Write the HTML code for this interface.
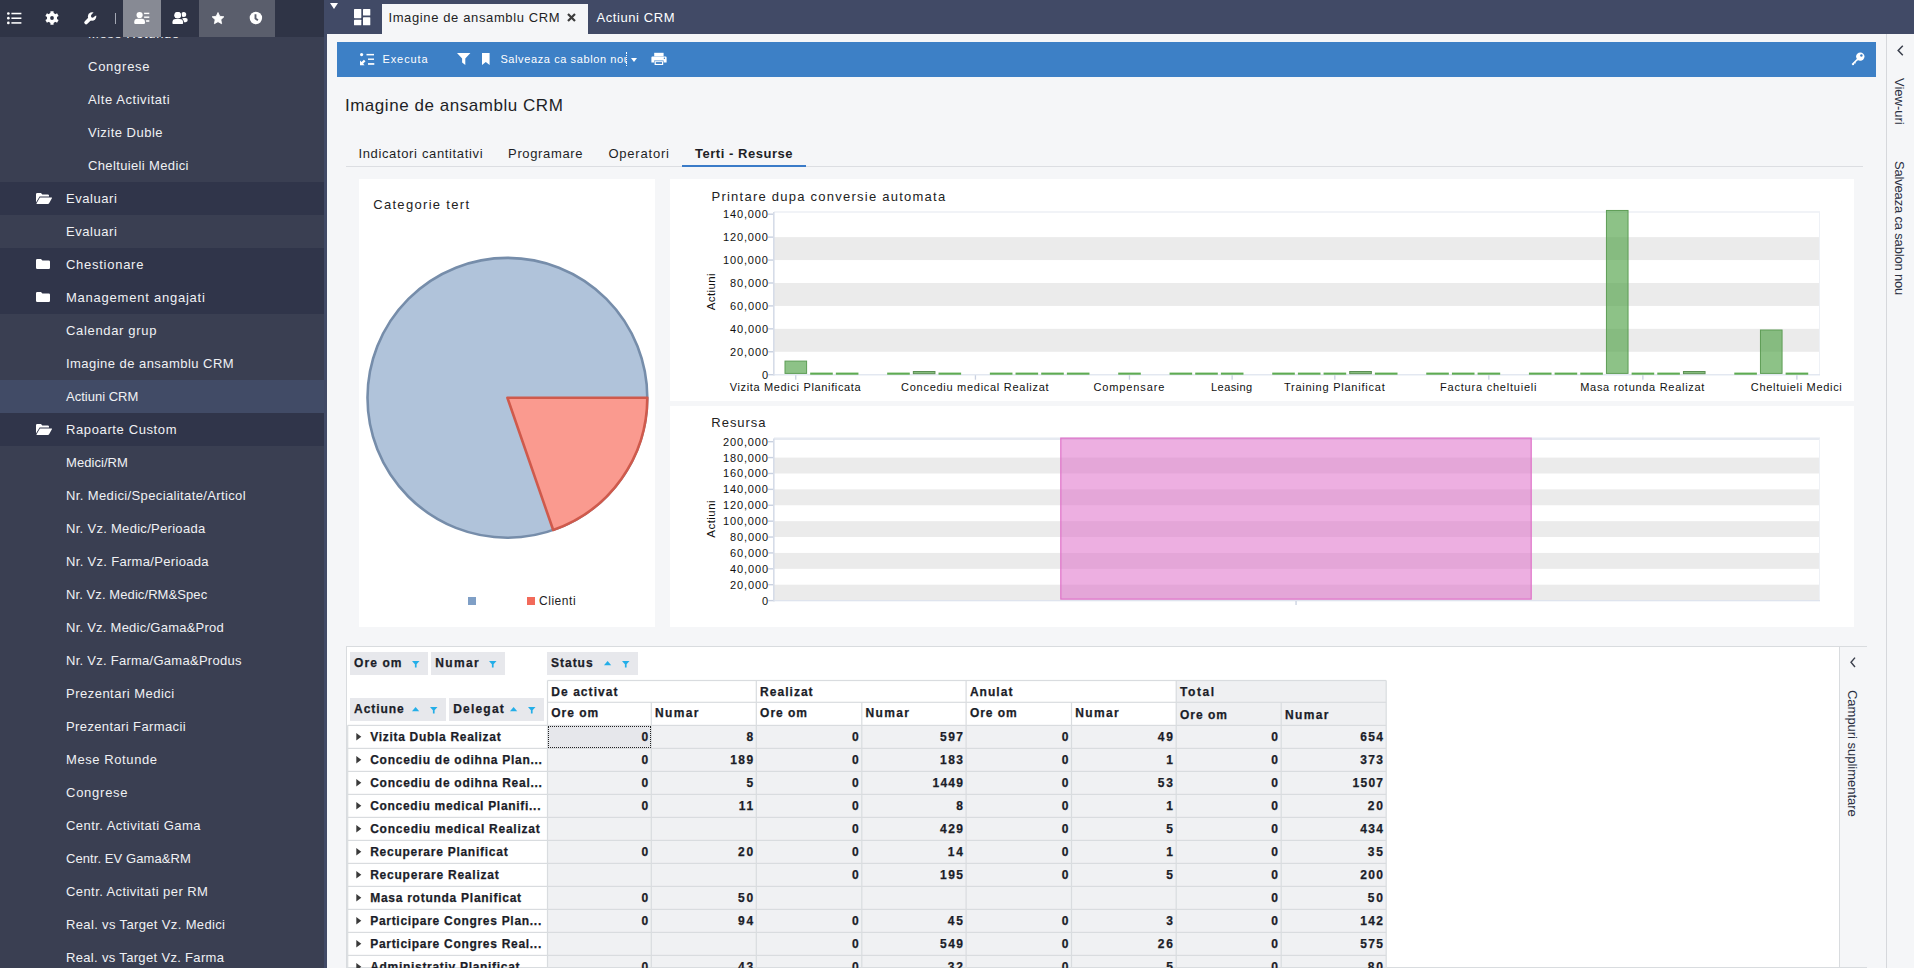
<!DOCTYPE html><html><head><meta charset="utf-8"><style>
*{box-sizing:border-box;margin:0;padding:0}
html,body{width:1914px;height:968px;overflow:hidden;background:#f5f6f8;font-family:"Liberation Sans",sans-serif;position:relative}
.a{position:absolute}
.t{position:absolute;white-space:nowrap}
svg{position:absolute;overflow:visible}
</style></head><body>
<div class="a" style="left:0px;top:0px;width:324px;height:968px;background:#3a3f52;"></div>
<div class="t" style="left:88.0px;top:27px;font-size:13px;line-height:13px;font-weight:400;color:#f0f1f4;letter-spacing:0.585px;">Mese Rotunde</div>
<div class="t" style="left:88.0px;top:60px;font-size:13px;line-height:13px;font-weight:400;color:#f0f1f4;letter-spacing:0.746px;">Congrese</div>
<div class="t" style="left:88.0px;top:93px;font-size:13px;line-height:13px;font-weight:400;color:#f0f1f4;letter-spacing:0.571px;">Alte Activitati</div>
<div class="t" style="left:88.0px;top:126px;font-size:13px;line-height:13px;font-weight:400;color:#f0f1f4;letter-spacing:0.487px;">Vizite Duble</div>
<div class="t" style="left:88.0px;top:159px;font-size:13px;line-height:13px;font-weight:400;color:#f0f1f4;letter-spacing:0.359px;">Cheltuieli Medici</div>
<div class="a" style="left:0px;top:182px;width:324px;height:33px;background:#30354a;"></div>
<svg style="left:36px;top:193px" width="16" height="11" viewBox="0 0 16 11"><path d="M0 1.2Q0 0 1.2 0H5L6.3 1.4H11.8Q13 1.4 13 2.6V3.6H3.6L0 9.5Z M3.9 4.6H15.6Q16.3 4.6 15.9 5.3L13.1 10.3Q12.7 11 12 11H0.9Q0.2 11 0.6 10.3Z" fill="#fff"/></svg>
<div class="t" style="left:66.0px;top:192px;font-size:13px;line-height:13px;font-weight:400;color:#f0f1f4;letter-spacing:0.562px;">Evaluari</div>
<div class="t" style="left:66.0px;top:225px;font-size:13px;line-height:13px;font-weight:400;color:#f0f1f4;letter-spacing:0.562px;">Evaluari</div>
<div class="a" style="left:0px;top:248px;width:324px;height:33px;background:#30354a;"></div>
<svg style="left:36px;top:259px" width="14" height="10" viewBox="0 0 14 10"><path d="M0 1.2Q0 0 1.2 0H5L6.4 1.5H12.8Q14 1.5 14 2.7V8.8Q14 10 12.8 10H1.2Q0 10 0 8.8Z" fill="#fff"/></svg>
<div class="t" style="left:66.0px;top:258px;font-size:13px;line-height:13px;font-weight:400;color:#f0f1f4;letter-spacing:0.729px;">Chestionare</div>
<div class="a" style="left:0px;top:281px;width:324px;height:33px;background:#30354a;"></div>
<svg style="left:36px;top:292px" width="14" height="10" viewBox="0 0 14 10"><path d="M0 1.2Q0 0 1.2 0H5L6.4 1.5H12.8Q14 1.5 14 2.7V8.8Q14 10 12.8 10H1.2Q0 10 0 8.8Z" fill="#fff"/></svg>
<div class="t" style="left:66.0px;top:291px;font-size:13px;line-height:13px;font-weight:400;color:#f0f1f4;letter-spacing:0.765px;">Management angajati</div>
<div class="t" style="left:66.0px;top:324px;font-size:13px;line-height:13px;font-weight:400;color:#f0f1f4;letter-spacing:0.667px;">Calendar grup</div>
<div class="t" style="left:66.0px;top:357px;font-size:13px;line-height:13px;font-weight:400;color:#f0f1f4;letter-spacing:0.458px;">Imagine de ansamblu CRM</div>
<div class="a" style="left:0px;top:380px;width:324px;height:33px;background:#414b66;"></div>
<div class="t" style="left:66.0px;top:390px;font-size:13px;line-height:13px;font-weight:400;color:#f0f1f4;letter-spacing:0.005px;">Actiuni CRM</div>
<div class="a" style="left:0px;top:413px;width:324px;height:33px;background:#30354a;"></div>
<svg style="left:36px;top:424px" width="16" height="11" viewBox="0 0 16 11"><path d="M0 1.2Q0 0 1.2 0H5L6.3 1.4H11.8Q13 1.4 13 2.6V3.6H3.6L0 9.5Z M3.9 4.6H15.6Q16.3 4.6 15.9 5.3L13.1 10.3Q12.7 11 12 11H0.9Q0.2 11 0.6 10.3Z" fill="#fff"/></svg>
<div class="t" style="left:66.0px;top:423px;font-size:13px;line-height:13px;font-weight:400;color:#f0f1f4;letter-spacing:0.615px;">Rapoarte Custom</div>
<div class="t" style="left:66.0px;top:456px;font-size:13px;line-height:13px;font-weight:400;color:#f0f1f4;letter-spacing:0.062px;">Medici/RM</div>
<div class="t" style="left:66.0px;top:489px;font-size:13px;line-height:13px;font-weight:400;color:#f0f1f4;letter-spacing:0.375px;">Nr. Medici/Specialitate/Articol</div>
<div class="t" style="left:66.0px;top:522px;font-size:13px;line-height:13px;font-weight:400;color:#f0f1f4;letter-spacing:0.297px;">Nr. Vz. Medic/Perioada</div>
<div class="t" style="left:66.0px;top:555px;font-size:13px;line-height:13px;font-weight:400;color:#f0f1f4;letter-spacing:0.318px;">Nr. Vz. Farma/Perioada</div>
<div class="t" style="left:66.0px;top:588px;font-size:13px;line-height:13px;font-weight:400;color:#f0f1f4;letter-spacing:0.088px;">Nr. Vz. Medic/RM&amp;Spec</div>
<div class="t" style="left:66.0px;top:621px;font-size:13px;line-height:13px;font-weight:400;color:#f0f1f4;letter-spacing:0.243px;">Nr. Vz. Medic/Gama&amp;Prod</div>
<div class="t" style="left:66.0px;top:654px;font-size:13px;line-height:13px;font-weight:400;color:#f0f1f4;letter-spacing:0.264px;">Nr. Vz. Farma/Gama&amp;Produs</div>
<div class="t" style="left:66.0px;top:687px;font-size:13px;line-height:13px;font-weight:400;color:#f0f1f4;letter-spacing:0.485px;">Prezentari Medici</div>
<div class="t" style="left:66.0px;top:720px;font-size:13px;line-height:13px;font-weight:400;color:#f0f1f4;letter-spacing:0.383px;">Prezentari Farmacii</div>
<div class="t" style="left:66.0px;top:753px;font-size:13px;line-height:13px;font-weight:400;color:#f0f1f4;letter-spacing:0.585px;">Mese Rotunde</div>
<div class="t" style="left:66.0px;top:786px;font-size:13px;line-height:13px;font-weight:400;color:#f0f1f4;letter-spacing:0.746px;">Congrese</div>
<div class="t" style="left:66.0px;top:819px;font-size:13px;line-height:13px;font-weight:400;color:#f0f1f4;letter-spacing:0.448px;">Centr. Activitati Gama</div>
<div class="t" style="left:66.0px;top:852px;font-size:13px;line-height:13px;font-weight:400;color:#f0f1f4;letter-spacing:0.078px;">Centr. EV Gama&amp;RM</div>
<div class="t" style="left:66.0px;top:885px;font-size:13px;line-height:13px;font-weight:400;color:#f0f1f4;letter-spacing:0.417px;">Centr. Activitati per RM</div>
<div class="t" style="left:66.0px;top:918px;font-size:13px;line-height:13px;font-weight:400;color:#f0f1f4;letter-spacing:0.358px;">Real. vs Target Vz. Medici</div>
<div class="t" style="left:66.0px;top:951px;font-size:13px;line-height:13px;font-weight:400;color:#f0f1f4;letter-spacing:0.331px;">Real. vs Target Vz. Farma</div>
<div class="a" style="left:0px;top:0px;width:324px;height:37px;background:#2f3446;"></div>
<div class="a" style="left:123px;top:0px;width:38px;height:37px;background:#878a94;"></div>
<div class="a" style="left:199px;top:0px;width:76px;height:37px;background:#5a5e6c;"></div>
<svg style="left:6.6px;top:11.6px" width="15" height="13" viewBox="0 0 15 13"><circle cx="1.35" cy="1.5" r="1.35" fill="#fff"/><circle cx="1.35" cy="6.2" r="1.35" fill="#fff"/><circle cx="1.35" cy="10.9" r="1.35" fill="#fff"/><rect x="4.4" y="0.75" width="10.0" height="1.55" fill="#fff"/><rect x="4.4" y="5.45" width="10.0" height="1.55" fill="#fff"/><rect x="4.4" y="10.15" width="10.0" height="1.55" fill="#fff"/></svg>
<svg style="left:44px;top:10px" width="16" height="16" viewBox="0 0 16 16"><polygon points="6.37,3.27 6.45,1.28 9.55,1.28 9.63,3.27 11.28,4.23 13.05,3.29 14.60,5.98 12.91,7.05 12.91,8.95 14.60,10.02 13.05,12.71 11.28,11.77 9.63,12.73 9.55,14.72 6.45,14.72 6.37,12.73 4.72,11.77 2.95,12.71 1.40,10.02 3.09,8.95 3.09,7.05 1.40,5.98 2.95,3.29 4.72,4.23" fill="#fff"/><circle cx="8.0" cy="8.0" r="5.0" fill="#fff"/><circle cx="8.0" cy="8.0" r="1.9" fill="#2f3446"/></svg>
<svg style="left:83.9px;top:11.8px" width="13" height="13" viewBox="0 0 13 13"><path d="M7.0 5.6L2.1 10.5" stroke="#fff" stroke-width="3.7" stroke-linecap="round"/><circle cx="8.1" cy="4.5" r="4.2" fill="#fff"/><path d="M7.3 3.1L10.2 -0.6 13.6 2.6 9.7 5.1Z" fill="#2f3446"/><circle cx="8.5" cy="4.1" r="1.55" fill="#2f3446"/></svg>
<div class="a" style="left:115px;top:13px;width:1px;height:11px;background:#a4a8b4;"></div>
<svg style="left:134px;top:11px" width="16" height="14" viewBox="0 0 16 14"><circle cx="5.6" cy="4.0" r="3.1" fill="#fff"/><path d="M0.2 12.1V11.2A3.4 3.4 0 0 1 3.6 7.8H7.6A3.4 3.4 0 0 1 11.0 11.2V12.1Q11.0 12.9 10.2 12.9H1.0Q0.2 12.9 0.2 12.1Z" fill="#fff"/><rect x="10.1" y="1.7" width="5.2" height="1.4" fill="#fff"/><rect x="10.1" y="5.5" width="5.2" height="1.4" fill="#fff"/><rect x="12.1" y="9.2" width="3.2" height="1.6" fill="#fff"/></svg>
<svg style="left:172px;top:11px" width="16" height="14" viewBox="0 0 16 14"><circle cx="11.7" cy="3.5" r="2.5" fill="#fff"/><rect x="9.8" y="6.9" width="5.9" height="4.3" rx="2.1" fill="#fff"/><g stroke="#2f3446" stroke-width="1.8" paint-order="stroke"><circle cx="5.7" cy="4.2" r="3.2" fill="#fff"/><path d="M0.4 12.299999999999999V11.4A3.4 3.4 0 0 1 3.8 8.0H7.699999999999999A3.4 3.4 0 0 1 11.1 11.4V12.299999999999999Q11.1 13.1 10.299999999999999 13.1H1.2000000000000002Q0.4 13.1 0.4 12.299999999999999Z" fill="#fff"/></g><circle cx="5.7" cy="4.2" r="3.2" fill="#fff"/></svg>
<svg style="left:210px;top:11px" width="15" height="14" viewBox="0 0 15 14"><polygon points="8.00,1.50 9.76,5.27 13.90,5.78 10.85,8.63 11.64,12.72 8.00,10.70 4.36,12.72 5.15,8.63 2.10,5.78 6.24,5.27" fill="#fff" stroke="#fff" stroke-width="0.8" stroke-linejoin="round"/></svg>
<svg style="left:249px;top:11px" width="14" height="14" viewBox="0 0 14 14"><circle cx="6.9" cy="7" r="6.2" fill="#fff"/><path d="M6.5 3.2V7.5L8.9 9.3" stroke="#5a5e6c" stroke-width="1.9" fill="none"/></svg>
<div class="a" style="left:324px;top:0px;width:3px;height:968px;background:#414a66;"></div>
<div class="a" style="left:324px;top:0px;width:1590px;height:34px;background:#414a66;"></div>
<div class="a" style="left:327px;top:34px;width:1587px;height:934px;background:#f5f6f8;"></div>
<svg style="left:330px;top:3px" width="8" height="6" viewBox="0 0 8 6"><path d="M0 0H8L4 6Z" fill="#fff"/></svg>
<svg style="left:354px;top:9px" width="17" height="17" viewBox="0 0 17 17"><rect x="0" y="0" width="7.3" height="9.2" rx="0.6" fill="#fff"/><rect x="9" y="0" width="7.3" height="6.5" rx="0.6" fill="#fff"/><rect x="0" y="10.7" width="7.3" height="5.6" rx="0.6" fill="#fff"/><rect x="9" y="8.2" width="7.3" height="8.1" rx="0.6" fill="#fff"/></svg>
<div class="a" style="left:382px;top:4px;width:206px;height:31px;background:#f5f6f8;"></div>
<div class="t" style="left:388.4px;top:11px;font-size:13px;line-height:13px;font-weight:400;color:#1e1e24;letter-spacing:0.626px;">Imagine de ansamblu CRM</div>
<svg style="left:567px;top:13px" width="9" height="9" viewBox="0 0 9 9"><path d="M1 1L8 8M8 1L1 8" stroke="#3c3c3c" stroke-width="2.2"/></svg>
<div class="t" style="left:596.4px;top:11px;font-size:13px;line-height:13px;font-weight:400;color:#ffffff;letter-spacing:0.595px;">Actiuni CRM</div>
<div class="a" style="left:1886px;top:34px;width:1px;height:934px;background:#d6d8dc;"></div>
<svg style="left:1897px;top:45px" width="7" height="11" viewBox="0 0 7 11"><path d="M5.8 0.8L1.2 5.5 5.8 10.2" stroke="#3a3f4c" stroke-width="1.5" fill="none"/></svg>
<div class="t" style="left:1893px;top:78px;writing-mode:vertical-rl;font-size:13px;line-height:13px;color:#2a2f3f">View-uri</div>
<div class="t" style="left:1893px;top:161px;writing-mode:vertical-rl;font-size:13px;line-height:13px;color:#2a2f3f;letter-spacing:-0.18px">Salveaza ca sablon nou</div>
<div class="a" style="left:337px;top:42px;width:1539px;height:35px;background:#3d80c6;"></div>
<svg style="left:360px;top:53px" width="15" height="13" viewBox="0 0 15 13"><circle cx="1.6" cy="1.6" r="1.6" fill="#fff"/><rect x="6.5" y="0.9" width="7.5" height="1.5" fill="#fff"/><rect x="8" y="5.5" width="6" height="1.4" fill="#fff"/><rect x="8" y="10.1" width="6.3" height="1.7" fill="#fff"/><path d="M0 12.2V7.6L1.5 9.1 3.9 6.7 5.5 8.3 3.1 10.7 4.6 12.2Z" fill="#fff"/></svg>
<div class="t" style="left:382.5px;top:54px;font-size:11px;line-height:11px;font-weight:400;color:#fff;letter-spacing:0.892px;">Executa</div>
<svg style="left:457px;top:53px" width="14" height="12" viewBox="0 0 14 12"><path d="M0 0H13.4L8.3 5.6V12L5.1 9.6V5.6Z" fill="#fff"/></svg>
<svg style="left:482px;top:53px" width="8" height="12" viewBox="0 0 8 12"><path d="M0 0H7.6V12L3.8 9 0 12Z" fill="#fff"/></svg>
<div class="a" style="left:501px;top:50px;width:125.5px;height:20px;overflow:hidden"><div class="t" style="left:-0.6px;top:4px;font-size:11px;line-height:11px;font-weight:400;color:#fff;letter-spacing:0.603px;">Salveaza ca sablon nou</div></div>
<div class="a" style="left:626px;top:52px;width:1px;height:14px;border-left:1px dotted #fff"></div>
<svg style="left:631px;top:58px" width="6" height="4" viewBox="0 0 6 4"><path d="M0 0H6L3 4Z" fill="#fff"/></svg>
<svg style="left:651px;top:52px" width="16" height="14" viewBox="0 0 16 14"><path d="M3.2 0.8H12.6V4.4H3.2Z" fill="#fff"/><path d="M1.4 4.6H14.6Q15.6 4.6 15.6 5.6V10.4H12.6V8.6H3.2V10.4H0.4V5.6Q0.4 4.6 1.4 4.6Z" fill="#fff"/><rect x="3.6" y="9.2" width="8.6" height="3.8" fill="#fff"/><rect x="4.8" y="10.1" width="6.2" height="1.8" fill="#3d80c6"/><circle cx="13.4" cy="6.3" r="0.7" fill="#3d80c6"/></svg>
<svg style="left:1851px;top:52px" width="14" height="14" viewBox="0 0 14 14"><circle cx="9.3" cy="4.6" r="4.2" fill="#fff"/><circle cx="10.4" cy="3.5" r="1.2" fill="#3d80c6"/><path d="M6.2 6.4L0.6 12 1.6 13.2 3 13 3.2 11.6 4.6 11.4 4.8 10 7.8 7.6Z" fill="#fff"/></svg>
<div class="t" style="left:344.9px;top:97px;font-size:17px;line-height:17px;font-weight:400;color:#1e1f26;letter-spacing:0.542px;">Imagine de ansamblu CRM</div>
<div class="a" style="left:346px;top:166px;width:1517px;height:1px;background:#dcdee2;"></div>
<div class="t" style="left:358.4px;top:147px;font-size:13px;line-height:13px;font-weight:400;color:#1e1f26;letter-spacing:0.649px;">Indicatori cantitativi</div>
<div class="t" style="left:508.1px;top:147px;font-size:13px;line-height:13px;font-weight:400;color:#1e1f26;letter-spacing:0.640px;">Programare</div>
<div class="t" style="left:608.4px;top:147px;font-size:13px;line-height:13px;font-weight:400;color:#1e1f26;letter-spacing:0.800px;">Operatori</div>
<div class="t" style="left:695.0px;top:147px;font-size:13px;line-height:13px;font-weight:700;color:#1e1f26;letter-spacing:0.530px;">Terti - Resurse</div>
<div class="a" style="left:682px;top:165px;width:124px;height:2px;background:#3a7bc8;"></div>
<div class="a" style="left:359px;top:179px;width:296px;height:448px;background:#fff;"></div>
<div class="a" style="left:670px;top:179px;width:1184px;height:222px;background:#fff;"></div>
<div class="a" style="left:670px;top:406px;width:1184px;height:221px;background:#fff;"></div>
<div class="t" style="left:373.2px;top:198px;font-size:13px;line-height:13px;font-weight:400;color:#222;letter-spacing:1.318px;">Categorie tert</div>
<svg style="left:0;top:0" width="1914" height="968" viewBox="0 0 1914 968"><circle cx="507.4" cy="397.8" r="139.9" fill="#b0c3da" stroke="#768daa" stroke-width="2.6"/><path d="M507.4 397.8L647.3 397.8A139.9 139.9 0 0 1 553.18 530.00Z" fill="#fa9a8f" stroke="#cf5a4c" stroke-width="2.6" stroke-linejoin="round"/></svg>
<div class="a" style="left:468px;top:597px;width:8px;height:8px;background:#7f9fc6;"></div>
<div class="a" style="left:527px;top:597px;width:8px;height:8px;background:#f26a5a;"></div>
<div class="t" style="left:539.0px;top:595px;font-size:12px;line-height:12px;font-weight:400;color:#222;letter-spacing:0.540px;">Clienti</div>
<div class="t" style="right:1146.00px;top:370px;font-size:11px;line-height:11px;font-weight:400;color:#111;">0</div>
<div class="t" style="right:1145.13px;top:347px;font-size:11px;line-height:11px;font-weight:400;color:#111;letter-spacing:0.869px;">20,000</div>
<div class="t" style="right:1145.13px;top:324px;font-size:11px;line-height:11px;font-weight:400;color:#111;letter-spacing:0.869px;">40,000</div>
<div class="t" style="right:1145.13px;top:301px;font-size:11px;line-height:11px;font-weight:400;color:#111;letter-spacing:0.869px;">60,000</div>
<div class="t" style="right:1145.13px;top:278px;font-size:11px;line-height:11px;font-weight:400;color:#111;letter-spacing:0.869px;">80,000</div>
<div class="t" style="right:1145.11px;top:255px;font-size:11px;line-height:11px;font-weight:400;color:#111;letter-spacing:0.889px;">100,000</div>
<div class="t" style="right:1145.11px;top:232px;font-size:11px;line-height:11px;font-weight:400;color:#111;letter-spacing:0.889px;">120,000</div>
<div class="t" style="right:1145.11px;top:209px;font-size:11px;line-height:11px;font-weight:400;color:#111;letter-spacing:0.889px;">140,000</div>
<div class="t" style="left:729.7px;top:382px;font-size:11px;line-height:11px;font-weight:400;color:#111;letter-spacing:0.652px;">Vizita Medici Planificata</div>
<div class="t" style="left:901.1px;top:382px;font-size:11px;line-height:11px;font-weight:400;color:#111;letter-spacing:0.719px;">Concediu medical Realizat</div>
<div class="t" style="left:1093.4px;top:382px;font-size:11px;line-height:11px;font-weight:400;color:#111;letter-spacing:0.891px;">Compensare</div>
<div class="t" style="left:1211.1px;top:382px;font-size:11px;line-height:11px;font-weight:400;color:#111;letter-spacing:0.409px;">Leasing</div>
<div class="t" style="left:1283.9px;top:382px;font-size:11px;line-height:11px;font-weight:400;color:#111;letter-spacing:0.765px;">Training Planificat</div>
<div class="t" style="left:1440.0px;top:382px;font-size:11px;line-height:11px;font-weight:400;color:#111;letter-spacing:0.785px;">Factura cheltuieli</div>
<div class="t" style="left:1580.2px;top:382px;font-size:11px;line-height:11px;font-weight:400;color:#111;letter-spacing:0.707px;">Masa rotunda Realizat</div>
<div class="t" style="left:1750.8px;top:382px;font-size:11px;line-height:11px;font-weight:400;color:#111;letter-spacing:0.682px;">Cheltuieli Medici</div>
<svg style="left:0;top:0" width="1914" height="968" viewBox="0 0 1914 968"><rect x="774" y="328.84" width="1046" height="22.93" fill="#ebebeb"/><rect x="774" y="282.99" width="1046" height="22.93" fill="#ebebeb"/><rect x="774" y="237.13" width="1046" height="22.93" fill="#ebebeb"/><rect x="774" y="211.5" width="1046" height="1" fill="#e3e8f0"/><rect x="1819" y="212" width="1" height="162.7" fill="#eef1f6"/><rect x="773" y="212" width="1.6" height="163.7" fill="#d6dce8"/><rect x="774" y="374.2" width="1046" height="1.2" fill="#dde3ee"/><rect x="768" y="374.00" width="5" height="1.4" fill="#c9d1e0"/><rect x="768" y="351.07" width="5" height="1.4" fill="#c9d1e0"/><rect x="768" y="328.14" width="5" height="1.4" fill="#c9d1e0"/><rect x="768" y="305.21" width="5" height="1.4" fill="#c9d1e0"/><rect x="768" y="282.29" width="5" height="1.4" fill="#c9d1e0"/><rect x="768" y="259.36" width="5" height="1.4" fill="#c9d1e0"/><rect x="768" y="236.43" width="5" height="1.4" fill="#c9d1e0"/><rect x="768" y="213.50" width="5" height="1.4" fill="#c9d1e0"/><rect x="785.00" y="361.10" width="21.60" height="12.30" fill="rgba(80,162,70,0.65)" stroke="#5d9d55" stroke-width="1"/><rect x="810.17" y="372.60" width="22.60" height="2.10" fill="#5eab52"/><rect x="835.84" y="372.60" width="22.60" height="2.10" fill="#5eab52"/><rect x="887.18" y="372.60" width="22.60" height="2.10" fill="#5eab52"/><rect x="913.35" y="371.50" width="21.60" height="2.2" fill="#86bd7e" stroke="#5b8f53" stroke-width="1"/><rect x="938.52" y="372.60" width="22.60" height="2.10" fill="#5eab52"/><rect x="989.86" y="372.60" width="22.60" height="2.10" fill="#5eab52"/><rect x="1015.53" y="372.60" width="22.60" height="2.10" fill="#5eab52"/><rect x="1041.20" y="372.60" width="22.60" height="2.10" fill="#5eab52"/><rect x="1066.87" y="372.60" width="22.60" height="2.10" fill="#5eab52"/><rect x="1118.21" y="372.60" width="22.60" height="2.10" fill="#5eab52"/><rect x="1169.55" y="372.60" width="22.60" height="2.10" fill="#5eab52"/><rect x="1195.22" y="372.60" width="22.60" height="2.10" fill="#5eab52"/><rect x="1220.89" y="372.60" width="22.60" height="2.10" fill="#5eab52"/><rect x="1272.23" y="372.60" width="22.60" height="2.10" fill="#5eab52"/><rect x="1297.90" y="372.60" width="22.60" height="2.10" fill="#5eab52"/><rect x="1323.57" y="372.60" width="22.60" height="2.10" fill="#5eab52"/><rect x="1349.74" y="371.50" width="21.60" height="2.2" fill="#86bd7e" stroke="#5b8f53" stroke-width="1"/><rect x="1374.91" y="372.60" width="22.60" height="2.10" fill="#5eab52"/><rect x="1426.25" y="372.60" width="22.60" height="2.10" fill="#5eab52"/><rect x="1451.92" y="372.60" width="22.60" height="2.10" fill="#5eab52"/><rect x="1477.59" y="372.60" width="22.60" height="2.10" fill="#5eab52"/><rect x="1528.93" y="372.60" width="22.60" height="2.10" fill="#5eab52"/><rect x="1554.60" y="372.60" width="22.60" height="2.10" fill="#5eab52"/><rect x="1580.27" y="372.60" width="22.60" height="2.10" fill="#5eab52"/><rect x="1606.44" y="210.46" width="21.60" height="162.94" fill="rgba(80,162,70,0.65)" stroke="#5d9d55" stroke-width="1"/><rect x="1631.61" y="372.60" width="22.60" height="2.10" fill="#5eab52"/><rect x="1657.28" y="372.60" width="22.60" height="2.10" fill="#5eab52"/><rect x="1683.45" y="371.50" width="21.60" height="2.2" fill="#86bd7e" stroke="#5b8f53" stroke-width="1"/><rect x="1734.29" y="372.60" width="22.60" height="2.10" fill="#5eab52"/><rect x="1760.46" y="330.03" width="21.60" height="43.37" fill="rgba(80,162,70,0.65)" stroke="#5d9d55" stroke-width="1"/><rect x="1785.63" y="372.60" width="22.60" height="2.10" fill="#5eab52"/><rect x="795.10" y="375.2" width="1.3" height="4.5" fill="#c9d1e0"/><rect x="974.79" y="375.2" width="1.3" height="4.5" fill="#c9d1e0"/><rect x="1128.81" y="375.2" width="1.3" height="4.5" fill="#c9d1e0"/><rect x="1231.49" y="375.2" width="1.3" height="4.5" fill="#c9d1e0"/><rect x="1334.17" y="375.2" width="1.3" height="4.5" fill="#c9d1e0"/><rect x="1488.19" y="375.2" width="1.3" height="4.5" fill="#c9d1e0"/><rect x="1642.21" y="375.2" width="1.3" height="4.5" fill="#c9d1e0"/><rect x="1796.23" y="375.2" width="1.3" height="4.5" fill="#c9d1e0"/></svg>
<div class="t" style="left:711.5px;top:190px;font-size:13px;line-height:13px;font-weight:400;color:#222;letter-spacing:1.244px;">Printare dupa conversie automata</div>
<div class="t" style="left:704.5px;top:273px;writing-mode:vertical-rl;transform:rotate(180deg);font-size:11.5px;line-height:13px;color:#111;letter-spacing:0.4px">Actiuni</div>
<div class="t" style="right:1146.00px;top:596px;font-size:11px;line-height:11px;font-weight:400;color:#111;">0</div>
<div class="t" style="right:1145.13px;top:580px;font-size:11px;line-height:11px;font-weight:400;color:#111;letter-spacing:0.869px;">20,000</div>
<div class="t" style="right:1145.13px;top:564px;font-size:11px;line-height:11px;font-weight:400;color:#111;letter-spacing:0.869px;">40,000</div>
<div class="t" style="right:1145.13px;top:548px;font-size:11px;line-height:11px;font-weight:400;color:#111;letter-spacing:0.869px;">60,000</div>
<div class="t" style="right:1145.13px;top:532px;font-size:11px;line-height:11px;font-weight:400;color:#111;letter-spacing:0.869px;">80,000</div>
<div class="t" style="right:1145.11px;top:516px;font-size:11px;line-height:11px;font-weight:400;color:#111;letter-spacing:0.889px;">100,000</div>
<div class="t" style="right:1145.11px;top:500px;font-size:11px;line-height:11px;font-weight:400;color:#111;letter-spacing:0.889px;">120,000</div>
<div class="t" style="right:1145.11px;top:484px;font-size:11px;line-height:11px;font-weight:400;color:#111;letter-spacing:0.889px;">140,000</div>
<div class="t" style="right:1145.11px;top:468px;font-size:11px;line-height:11px;font-weight:400;color:#111;letter-spacing:0.889px;">160,000</div>
<div class="t" style="right:1145.11px;top:453px;font-size:11px;line-height:11px;font-weight:400;color:#111;letter-spacing:0.889px;">180,000</div>
<div class="t" style="right:1145.11px;top:437px;font-size:11px;line-height:11px;font-weight:400;color:#111;letter-spacing:0.889px;">200,000</div>
<svg style="left:0;top:0" width="1914" height="968" viewBox="0 0 1914 968"><rect x="774" y="584.71" width="1046" height="15.89" fill="#ebebeb"/><rect x="774" y="552.93" width="1046" height="15.89" fill="#ebebeb"/><rect x="774" y="521.15" width="1046" height="15.89" fill="#ebebeb"/><rect x="774" y="489.37" width="1046" height="15.89" fill="#ebebeb"/><rect x="774" y="457.59" width="1046" height="15.89" fill="#ebebeb"/><rect x="774" y="437.5" width="1046" height="2.5" fill="#e6eaf1"/><rect x="1819" y="438.5" width="1" height="162.10000000000002" fill="#eef1f6"/><rect x="773" y="438.5" width="1.6" height="163.10000000000002" fill="#d6dce8"/><rect x="774" y="600.1" width="1046" height="1.2" fill="#dde3ee"/><rect x="768" y="599.90" width="5" height="1.4" fill="#c9d1e0"/><rect x="768" y="584.01" width="5" height="1.4" fill="#c9d1e0"/><rect x="768" y="568.12" width="5" height="1.4" fill="#c9d1e0"/><rect x="768" y="552.23" width="5" height="1.4" fill="#c9d1e0"/><rect x="768" y="536.34" width="5" height="1.4" fill="#c9d1e0"/><rect x="768" y="520.45" width="5" height="1.4" fill="#c9d1e0"/><rect x="768" y="504.56" width="5" height="1.4" fill="#c9d1e0"/><rect x="768" y="488.67" width="5" height="1.4" fill="#c9d1e0"/><rect x="768" y="472.78" width="5" height="1.4" fill="#c9d1e0"/><rect x="768" y="456.89" width="5" height="1.4" fill="#c9d1e0"/><rect x="768" y="441.00" width="5" height="1.4" fill="#c9d1e0"/><rect x="1060.8" y="438.1" width="470.4" height="161" fill="rgba(222,110,200,0.55)" stroke="#df72c9" stroke-width="1.2"/><rect x="1295.4" y="601" width="1.3" height="4" fill="#c9d1e0"/></svg>
<div class="t" style="left:711.3px;top:416px;font-size:13px;line-height:13px;font-weight:400;color:#222;letter-spacing:0.980px;">Resursa</div>
<div class="t" style="left:704.5px;top:500px;writing-mode:vertical-rl;transform:rotate(180deg);font-size:11.5px;line-height:13px;color:#111;letter-spacing:0.45px">Actiuni</div>
<div class="a" style="left:346px;top:646px;width:1521px;height:322px;background:#fff;border-left:1px solid #d9dcdf;border-top:1px solid #d9dcdf"></div>
<div class="a" style="left:1839px;top:647px;width:28px;height:321px;background:#f5f6f8;border-left:1.5px solid #d9dcdf"></div>
<svg style="left:1850px;top:657px" width="6" height="11" viewBox="0 0 6 11"><path d="M5 0.6L1 5.3 5 10" stroke="#3a3f4c" stroke-width="1.4" fill="none"/></svg>
<div class="t" style="left:1846px;top:690px;writing-mode:vertical-rl;font-size:13px;line-height:13px;color:#2a2f3f;letter-spacing:-0.02px">Campuri suplimentare</div>
<div class="a" style="left:350px;top:652px;width:78px;height:23px;background:#e7e8ec;"></div>
<div class="t" style="left:354.1px;top:657px;font-size:12px;line-height:12px;font-weight:700;color:#1b1d28;letter-spacing:1.077px;-webkit-text-stroke:0.25px #1b1d28;">Ore om</div>
<svg style="left:411.6px;top:661px" width="8" height="7" viewBox="0 0 8 7"><path d="M0 0H7.5L4.6 3.2V6.4H2.9V3.2Z" fill="#23aee8"/></svg>
<div class="a" style="left:431px;top:652px;width:74px;height:23px;background:#e7e8ec;"></div>
<div class="t" style="left:435.2px;top:657px;font-size:12px;line-height:12px;font-weight:700;color:#1b1d28;letter-spacing:1.346px;-webkit-text-stroke:0.25px #1b1d28;">Numar</div>
<svg style="left:488.7px;top:661px" width="8" height="7" viewBox="0 0 8 7"><path d="M0 0H7.5L4.6 3.2V6.4H2.9V3.2Z" fill="#23aee8"/></svg>
<div class="a" style="left:547px;top:652px;width:91px;height:23px;background:#e7e8ec;"></div>
<div class="t" style="left:551.1px;top:657px;font-size:12px;line-height:12px;font-weight:700;color:#1b1d28;letter-spacing:0.963px;-webkit-text-stroke:0.25px #1b1d28;">Status</div>
<svg style="left:604px;top:661px" width="8" height="5" viewBox="0 0 8 5"><path d="M0 4.2H7.2L3.6 0Z" fill="#23aee8"/></svg>
<svg style="left:622px;top:661px" width="8" height="7" viewBox="0 0 8 7"><path d="M0 0H7.5L4.6 3.2V6.4H2.9V3.2Z" fill="#23aee8"/></svg>
<div class="a" style="left:350px;top:698px;width:96px;height:23px;background:#e7e8ec;"></div>
<div class="t" style="left:354.1px;top:703px;font-size:12px;line-height:12px;font-weight:700;color:#1b1d28;letter-spacing:0.947px;-webkit-text-stroke:0.25px #1b1d28;">Actiune</div>
<svg style="left:412px;top:707px" width="8" height="5" viewBox="0 0 8 5"><path d="M0 4.2H7.2L3.6 0Z" fill="#23aee8"/></svg>
<svg style="left:430px;top:707px" width="8" height="7" viewBox="0 0 8 7"><path d="M0 0H7.5L4.6 3.2V6.4H2.9V3.2Z" fill="#23aee8"/></svg>
<div class="a" style="left:449px;top:698px;width:95px;height:23px;background:#e7e8ec;"></div>
<div class="t" style="left:453.2px;top:703px;font-size:12px;line-height:12px;font-weight:700;color:#1b1d28;letter-spacing:1.207px;-webkit-text-stroke:0.25px #1b1d28;">Delegat</div>
<svg style="left:510px;top:707px" width="8" height="5" viewBox="0 0 8 5"><path d="M0 4.2H7.2L3.6 0Z" fill="#23aee8"/></svg>
<svg style="left:528px;top:707px" width="8" height="7" viewBox="0 0 8 7"><path d="M0 0H7.5L4.6 3.2V6.4H2.9V3.2Z" fill="#23aee8"/></svg>
<div class="a" style="left:547.5px;top:680.5px;width:628.7px;height:44.89999999999998px;background:#fff;"></div>
<div class="a" style="left:1176.2px;top:680.5px;width:210.0px;height:44.89999999999998px;background:#eff0f2;"></div>
<div class="a" style="left:547.5px;top:725.4px;width:838.7px;height:242.60000000000002px;background:#f0f1f3;"></div>
<div class="a" style="left:347.5px;top:725.4px;width:200px;height:242.60000000000002px;background:#fff;"></div>
<div class="a" style="left:547.5px;top:725.4px;width:103.8px;height:23px;background:#e6e7eb;"></div>
<svg style="left:0;top:0" width="1914" height="968" viewBox="0 0 1914 968"><rect x="547.5" y="679.90" width="838.70" height="1.2" fill="#d9dcdf"/><rect x="547.5" y="701.70" width="838.70" height="1.2" fill="#d9dcdf"/><rect x="347.5" y="724.80" width="1038.70" height="1.2" fill="#d9dcdf"/><rect x="347.5" y="747.80" width="1038.70" height="1.2" fill="#d9dcdf"/><rect x="347.5" y="770.80" width="1038.70" height="1.2" fill="#d9dcdf"/><rect x="347.5" y="793.80" width="1038.70" height="1.2" fill="#d9dcdf"/><rect x="347.5" y="816.80" width="1038.70" height="1.2" fill="#d9dcdf"/><rect x="347.5" y="839.80" width="1038.70" height="1.2" fill="#d9dcdf"/><rect x="347.5" y="862.80" width="1038.70" height="1.2" fill="#d9dcdf"/><rect x="347.5" y="885.80" width="1038.70" height="1.2" fill="#d9dcdf"/><rect x="347.5" y="908.80" width="1038.70" height="1.2" fill="#d9dcdf"/><rect x="347.5" y="931.80" width="1038.70" height="1.2" fill="#d9dcdf"/><rect x="347.5" y="954.80" width="1038.70" height="1.2" fill="#d9dcdf"/><rect x="347.5" y="977.80" width="1038.70" height="1.2" fill="#d9dcdf"/><rect x="347.10" y="725.4" width="1.2" height="242.60" fill="#d9dcdf"/><rect x="546.90" y="680.5" width="1.2" height="287.50" fill="#d9dcdf"/><rect x="650.70" y="702.3" width="1.2" height="265.70" fill="#d9dcdf"/><rect x="755.70" y="680.5" width="1.2" height="287.50" fill="#d9dcdf"/><rect x="861.20" y="702.3" width="1.2" height="265.70" fill="#d9dcdf"/><rect x="965.50" y="680.5" width="1.2" height="287.50" fill="#d9dcdf"/><rect x="1070.90" y="702.3" width="1.2" height="265.70" fill="#d9dcdf"/><rect x="1175.60" y="680.5" width="1.2" height="287.50" fill="#d9dcdf"/><rect x="1280.60" y="702.3" width="1.2" height="265.70" fill="#d9dcdf"/><rect x="1385.60" y="680.5" width="1.2" height="287.50" fill="#d9dcdf"/></svg>
<div class="a" style="left:547.5px;top:725.8px;width:103.5px;height:22.2px;border:1.3px dotted #222"></div>
<div class="a" style="left:346px;top:966.5px;width:1521px;height:1.5px;background:#d9dcdf;"></div>
<div class="t" style="left:551.3px;top:686px;font-size:12px;line-height:12px;font-weight:700;color:#1b1d28;letter-spacing:1.055px;-webkit-text-stroke:0.25px #1b1d28;">De activat</div>
<div class="t" style="left:760.1px;top:686px;font-size:12px;line-height:12px;font-weight:700;color:#1b1d28;letter-spacing:1.020px;-webkit-text-stroke:0.25px #1b1d28;">Realizat</div>
<div class="t" style="left:969.9px;top:686px;font-size:12px;line-height:12px;font-weight:700;color:#1b1d28;letter-spacing:1.051px;-webkit-text-stroke:0.25px #1b1d28;">Anulat</div>
<div class="t" style="left:1180.0px;top:686px;font-size:12px;line-height:12px;font-weight:700;color:#1b1d28;letter-spacing:1.605px;-webkit-text-stroke:0.25px #1b1d28;">Total</div>
<div class="t" style="left:551.3px;top:707px;font-size:12px;line-height:12px;font-weight:700;color:#1b1d28;letter-spacing:0.977px;-webkit-text-stroke:0.25px #1b1d28;">Ore om</div>
<div class="t" style="left:655.1px;top:707px;font-size:12px;line-height:12px;font-weight:700;color:#1b1d28;letter-spacing:1.346px;-webkit-text-stroke:0.25px #1b1d28;">Numar</div>
<div class="t" style="left:760.1px;top:707px;font-size:12px;line-height:12px;font-weight:700;color:#1b1d28;letter-spacing:0.977px;-webkit-text-stroke:0.25px #1b1d28;">Ore om</div>
<div class="t" style="left:865.6px;top:707px;font-size:12px;line-height:12px;font-weight:700;color:#1b1d28;letter-spacing:1.346px;-webkit-text-stroke:0.25px #1b1d28;">Numar</div>
<div class="t" style="left:969.9px;top:707px;font-size:12px;line-height:12px;font-weight:700;color:#1b1d28;letter-spacing:0.977px;-webkit-text-stroke:0.25px #1b1d28;">Ore om</div>
<div class="t" style="left:1075.3px;top:707px;font-size:12px;line-height:12px;font-weight:700;color:#1b1d28;letter-spacing:1.346px;-webkit-text-stroke:0.25px #1b1d28;">Numar</div>
<div class="t" style="left:1180.0px;top:709px;font-size:12px;line-height:12px;font-weight:700;color:#1b1d28;letter-spacing:0.977px;-webkit-text-stroke:0.25px #1b1d28;">Ore om</div>
<div class="t" style="left:1285.0px;top:709px;font-size:12px;line-height:12px;font-weight:700;color:#1b1d28;letter-spacing:1.346px;-webkit-text-stroke:0.25px #1b1d28;">Numar</div>
<svg style="left:356px;top:733.0px" width="6" height="8" viewBox="0 0 6 8"><path d="M0.3 0L5.3 3.8 0.3 7.6Z" fill="#3a3a3a"/></svg>
<div class="t" style="left:370.2px;top:731px;font-size:12px;line-height:12px;font-weight:700;color:#1b1d28;letter-spacing:0.699px;-webkit-text-stroke:0.25px #1b1d28;">Vizita Dubla Realizat</div>
<div class="t" style="right:1265.90px;top:731px;font-size:12px;line-height:12px;font-weight:700;color:#1b1d28;-webkit-text-stroke:0.25px #1b1d28;">0</div>
<div class="t" style="right:1160.90px;top:731px;font-size:12px;line-height:12px;font-weight:700;color:#1b1d28;-webkit-text-stroke:0.25px #1b1d28;">8</div>
<div class="t" style="right:1055.40px;top:731px;font-size:12px;line-height:12px;font-weight:700;color:#1b1d28;-webkit-text-stroke:0.25px #1b1d28;">0</div>
<div class="t" style="right:949.70px;top:731px;font-size:12px;line-height:12px;font-weight:700;color:#1b1d28;letter-spacing:1.402px;-webkit-text-stroke:0.25px #1b1d28;">597</div>
<div class="t" style="right:845.70px;top:731px;font-size:12px;line-height:12px;font-weight:700;color:#1b1d28;-webkit-text-stroke:0.25px #1b1d28;">0</div>
<div class="t" style="right:739.13px;top:731px;font-size:12px;line-height:12px;font-weight:700;color:#1b1d28;letter-spacing:1.870px;-webkit-text-stroke:0.25px #1b1d28;">49</div>
<div class="t" style="right:636.00px;top:731px;font-size:12px;line-height:12px;font-weight:700;color:#1b1d28;-webkit-text-stroke:0.25px #1b1d28;">0</div>
<div class="t" style="right:529.60px;top:731px;font-size:12px;line-height:12px;font-weight:700;color:#1b1d28;letter-spacing:1.402px;-webkit-text-stroke:0.25px #1b1d28;">654</div>
<svg style="left:356px;top:756.0px" width="6" height="8" viewBox="0 0 6 8"><path d="M0.3 0L5.3 3.8 0.3 7.6Z" fill="#3a3a3a"/></svg>
<div class="t" style="left:370.2px;top:754px;font-size:12px;line-height:12px;font-weight:700;color:#1b1d28;letter-spacing:0.736px;-webkit-text-stroke:0.25px #1b1d28;">Concediu de odihna Plan...</div>
<div class="t" style="right:1265.90px;top:754px;font-size:12px;line-height:12px;font-weight:700;color:#1b1d28;-webkit-text-stroke:0.25px #1b1d28;">0</div>
<div class="t" style="right:1159.50px;top:754px;font-size:12px;line-height:12px;font-weight:700;color:#1b1d28;letter-spacing:1.402px;-webkit-text-stroke:0.25px #1b1d28;">189</div>
<div class="t" style="right:1055.40px;top:754px;font-size:12px;line-height:12px;font-weight:700;color:#1b1d28;-webkit-text-stroke:0.25px #1b1d28;">0</div>
<div class="t" style="right:949.70px;top:754px;font-size:12px;line-height:12px;font-weight:700;color:#1b1d28;letter-spacing:1.402px;-webkit-text-stroke:0.25px #1b1d28;">183</div>
<div class="t" style="right:845.70px;top:754px;font-size:12px;line-height:12px;font-weight:700;color:#1b1d28;-webkit-text-stroke:0.25px #1b1d28;">0</div>
<div class="t" style="right:741.00px;top:754px;font-size:12px;line-height:12px;font-weight:700;color:#1b1d28;-webkit-text-stroke:0.25px #1b1d28;">1</div>
<div class="t" style="right:636.00px;top:754px;font-size:12px;line-height:12px;font-weight:700;color:#1b1d28;-webkit-text-stroke:0.25px #1b1d28;">0</div>
<div class="t" style="right:529.60px;top:754px;font-size:12px;line-height:12px;font-weight:700;color:#1b1d28;letter-spacing:1.402px;-webkit-text-stroke:0.25px #1b1d28;">373</div>
<svg style="left:356px;top:779.0px" width="6" height="8" viewBox="0 0 6 8"><path d="M0.3 0L5.3 3.8 0.3 7.6Z" fill="#3a3a3a"/></svg>
<div class="t" style="left:370.2px;top:777px;font-size:12px;line-height:12px;font-weight:700;color:#1b1d28;letter-spacing:0.736px;-webkit-text-stroke:0.25px #1b1d28;">Concediu de odihna Real...</div>
<div class="t" style="right:1265.90px;top:777px;font-size:12px;line-height:12px;font-weight:700;color:#1b1d28;-webkit-text-stroke:0.25px #1b1d28;">0</div>
<div class="t" style="right:1160.90px;top:777px;font-size:12px;line-height:12px;font-weight:700;color:#1b1d28;-webkit-text-stroke:0.25px #1b1d28;">5</div>
<div class="t" style="right:1055.40px;top:777px;font-size:12px;line-height:12px;font-weight:700;color:#1b1d28;-webkit-text-stroke:0.25px #1b1d28;">0</div>
<div class="t" style="right:949.85px;top:777px;font-size:12px;line-height:12px;font-weight:700;color:#1b1d28;letter-spacing:1.246px;-webkit-text-stroke:0.25px #1b1d28;">1449</div>
<div class="t" style="right:845.70px;top:777px;font-size:12px;line-height:12px;font-weight:700;color:#1b1d28;-webkit-text-stroke:0.25px #1b1d28;">0</div>
<div class="t" style="right:739.13px;top:777px;font-size:12px;line-height:12px;font-weight:700;color:#1b1d28;letter-spacing:1.870px;-webkit-text-stroke:0.25px #1b1d28;">53</div>
<div class="t" style="right:636.00px;top:777px;font-size:12px;line-height:12px;font-weight:700;color:#1b1d28;-webkit-text-stroke:0.25px #1b1d28;">0</div>
<div class="t" style="right:529.75px;top:777px;font-size:12px;line-height:12px;font-weight:700;color:#1b1d28;letter-spacing:1.246px;-webkit-text-stroke:0.25px #1b1d28;">1507</div>
<svg style="left:356px;top:802.0px" width="6" height="8" viewBox="0 0 6 8"><path d="M0.3 0L5.3 3.8 0.3 7.6Z" fill="#3a3a3a"/></svg>
<div class="t" style="left:370.2px;top:800px;font-size:12px;line-height:12px;font-weight:700;color:#1b1d28;letter-spacing:0.702px;-webkit-text-stroke:0.25px #1b1d28;">Concediu medical Planifi...</div>
<div class="t" style="right:1265.90px;top:800px;font-size:12px;line-height:12px;font-weight:700;color:#1b1d28;-webkit-text-stroke:0.25px #1b1d28;">0</div>
<div class="t" style="right:1159.12px;top:800px;font-size:12px;line-height:12px;font-weight:700;color:#1b1d28;letter-spacing:1.776px;-webkit-text-stroke:0.25px #1b1d28;">11</div>
<div class="t" style="right:1055.40px;top:800px;font-size:12px;line-height:12px;font-weight:700;color:#1b1d28;-webkit-text-stroke:0.25px #1b1d28;">0</div>
<div class="t" style="right:951.10px;top:800px;font-size:12px;line-height:12px;font-weight:700;color:#1b1d28;-webkit-text-stroke:0.25px #1b1d28;">8</div>
<div class="t" style="right:845.70px;top:800px;font-size:12px;line-height:12px;font-weight:700;color:#1b1d28;-webkit-text-stroke:0.25px #1b1d28;">0</div>
<div class="t" style="right:741.00px;top:800px;font-size:12px;line-height:12px;font-weight:700;color:#1b1d28;-webkit-text-stroke:0.25px #1b1d28;">1</div>
<div class="t" style="right:636.00px;top:800px;font-size:12px;line-height:12px;font-weight:700;color:#1b1d28;-webkit-text-stroke:0.25px #1b1d28;">0</div>
<div class="t" style="right:529.13px;top:800px;font-size:12px;line-height:12px;font-weight:700;color:#1b1d28;letter-spacing:1.870px;-webkit-text-stroke:0.25px #1b1d28;">20</div>
<svg style="left:356px;top:825.0px" width="6" height="8" viewBox="0 0 6 8"><path d="M0.3 0L5.3 3.8 0.3 7.6Z" fill="#3a3a3a"/></svg>
<div class="t" style="left:370.2px;top:823px;font-size:12px;line-height:12px;font-weight:700;color:#1b1d28;letter-spacing:0.757px;-webkit-text-stroke:0.25px #1b1d28;">Concediu medical Realizat</div>
<div class="t" style="right:1055.40px;top:823px;font-size:12px;line-height:12px;font-weight:700;color:#1b1d28;-webkit-text-stroke:0.25px #1b1d28;">0</div>
<div class="t" style="right:949.70px;top:823px;font-size:12px;line-height:12px;font-weight:700;color:#1b1d28;letter-spacing:1.402px;-webkit-text-stroke:0.25px #1b1d28;">429</div>
<div class="t" style="right:845.70px;top:823px;font-size:12px;line-height:12px;font-weight:700;color:#1b1d28;-webkit-text-stroke:0.25px #1b1d28;">0</div>
<div class="t" style="right:741.00px;top:823px;font-size:12px;line-height:12px;font-weight:700;color:#1b1d28;-webkit-text-stroke:0.25px #1b1d28;">5</div>
<div class="t" style="right:636.00px;top:823px;font-size:12px;line-height:12px;font-weight:700;color:#1b1d28;-webkit-text-stroke:0.25px #1b1d28;">0</div>
<div class="t" style="right:529.60px;top:823px;font-size:12px;line-height:12px;font-weight:700;color:#1b1d28;letter-spacing:1.402px;-webkit-text-stroke:0.25px #1b1d28;">434</div>
<svg style="left:356px;top:848.0px" width="6" height="8" viewBox="0 0 6 8"><path d="M0.3 0L5.3 3.8 0.3 7.6Z" fill="#3a3a3a"/></svg>
<div class="t" style="left:370.2px;top:846px;font-size:12px;line-height:12px;font-weight:700;color:#1b1d28;letter-spacing:0.736px;-webkit-text-stroke:0.25px #1b1d28;">Recuperare Planificat</div>
<div class="t" style="right:1265.90px;top:846px;font-size:12px;line-height:12px;font-weight:700;color:#1b1d28;-webkit-text-stroke:0.25px #1b1d28;">0</div>
<div class="t" style="right:1159.03px;top:846px;font-size:12px;line-height:12px;font-weight:700;color:#1b1d28;letter-spacing:1.870px;-webkit-text-stroke:0.25px #1b1d28;">20</div>
<div class="t" style="right:1055.40px;top:846px;font-size:12px;line-height:12px;font-weight:700;color:#1b1d28;-webkit-text-stroke:0.25px #1b1d28;">0</div>
<div class="t" style="right:949.23px;top:846px;font-size:12px;line-height:12px;font-weight:700;color:#1b1d28;letter-spacing:1.870px;-webkit-text-stroke:0.25px #1b1d28;">14</div>
<div class="t" style="right:845.70px;top:846px;font-size:12px;line-height:12px;font-weight:700;color:#1b1d28;-webkit-text-stroke:0.25px #1b1d28;">0</div>
<div class="t" style="right:741.00px;top:846px;font-size:12px;line-height:12px;font-weight:700;color:#1b1d28;-webkit-text-stroke:0.25px #1b1d28;">1</div>
<div class="t" style="right:636.00px;top:846px;font-size:12px;line-height:12px;font-weight:700;color:#1b1d28;-webkit-text-stroke:0.25px #1b1d28;">0</div>
<div class="t" style="right:529.13px;top:846px;font-size:12px;line-height:12px;font-weight:700;color:#1b1d28;letter-spacing:1.870px;-webkit-text-stroke:0.25px #1b1d28;">35</div>
<svg style="left:356px;top:871.0px" width="6" height="8" viewBox="0 0 6 8"><path d="M0.3 0L5.3 3.8 0.3 7.6Z" fill="#3a3a3a"/></svg>
<div class="t" style="left:370.2px;top:869px;font-size:12px;line-height:12px;font-weight:700;color:#1b1d28;letter-spacing:0.765px;-webkit-text-stroke:0.25px #1b1d28;">Recuperare Realizat</div>
<div class="t" style="right:1055.40px;top:869px;font-size:12px;line-height:12px;font-weight:700;color:#1b1d28;-webkit-text-stroke:0.25px #1b1d28;">0</div>
<div class="t" style="right:949.70px;top:869px;font-size:12px;line-height:12px;font-weight:700;color:#1b1d28;letter-spacing:1.402px;-webkit-text-stroke:0.25px #1b1d28;">195</div>
<div class="t" style="right:845.70px;top:869px;font-size:12px;line-height:12px;font-weight:700;color:#1b1d28;-webkit-text-stroke:0.25px #1b1d28;">0</div>
<div class="t" style="right:741.00px;top:869px;font-size:12px;line-height:12px;font-weight:700;color:#1b1d28;-webkit-text-stroke:0.25px #1b1d28;">5</div>
<div class="t" style="right:636.00px;top:869px;font-size:12px;line-height:12px;font-weight:700;color:#1b1d28;-webkit-text-stroke:0.25px #1b1d28;">0</div>
<div class="t" style="right:529.60px;top:869px;font-size:12px;line-height:12px;font-weight:700;color:#1b1d28;letter-spacing:1.402px;-webkit-text-stroke:0.25px #1b1d28;">200</div>
<svg style="left:356px;top:894.0px" width="6" height="8" viewBox="0 0 6 8"><path d="M0.3 0L5.3 3.8 0.3 7.6Z" fill="#3a3a3a"/></svg>
<div class="t" style="left:370.2px;top:892px;font-size:12px;line-height:12px;font-weight:700;color:#1b1d28;letter-spacing:0.735px;-webkit-text-stroke:0.25px #1b1d28;">Masa rotunda Planificat</div>
<div class="t" style="right:1265.90px;top:892px;font-size:12px;line-height:12px;font-weight:700;color:#1b1d28;-webkit-text-stroke:0.25px #1b1d28;">0</div>
<div class="t" style="right:1159.03px;top:892px;font-size:12px;line-height:12px;font-weight:700;color:#1b1d28;letter-spacing:1.870px;-webkit-text-stroke:0.25px #1b1d28;">50</div>
<div class="t" style="right:636.00px;top:892px;font-size:12px;line-height:12px;font-weight:700;color:#1b1d28;-webkit-text-stroke:0.25px #1b1d28;">0</div>
<div class="t" style="right:529.13px;top:892px;font-size:12px;line-height:12px;font-weight:700;color:#1b1d28;letter-spacing:1.870px;-webkit-text-stroke:0.25px #1b1d28;">50</div>
<svg style="left:356px;top:917.0px" width="6" height="8" viewBox="0 0 6 8"><path d="M0.3 0L5.3 3.8 0.3 7.6Z" fill="#3a3a3a"/></svg>
<div class="t" style="left:370.2px;top:915px;font-size:12px;line-height:12px;font-weight:700;color:#1b1d28;letter-spacing:0.705px;-webkit-text-stroke:0.25px #1b1d28;">Participare Congres Plan...</div>
<div class="t" style="right:1265.90px;top:915px;font-size:12px;line-height:12px;font-weight:700;color:#1b1d28;-webkit-text-stroke:0.25px #1b1d28;">0</div>
<div class="t" style="right:1159.03px;top:915px;font-size:12px;line-height:12px;font-weight:700;color:#1b1d28;letter-spacing:1.870px;-webkit-text-stroke:0.25px #1b1d28;">94</div>
<div class="t" style="right:1055.40px;top:915px;font-size:12px;line-height:12px;font-weight:700;color:#1b1d28;-webkit-text-stroke:0.25px #1b1d28;">0</div>
<div class="t" style="right:949.23px;top:915px;font-size:12px;line-height:12px;font-weight:700;color:#1b1d28;letter-spacing:1.870px;-webkit-text-stroke:0.25px #1b1d28;">45</div>
<div class="t" style="right:845.70px;top:915px;font-size:12px;line-height:12px;font-weight:700;color:#1b1d28;-webkit-text-stroke:0.25px #1b1d28;">0</div>
<div class="t" style="right:741.00px;top:915px;font-size:12px;line-height:12px;font-weight:700;color:#1b1d28;-webkit-text-stroke:0.25px #1b1d28;">3</div>
<div class="t" style="right:636.00px;top:915px;font-size:12px;line-height:12px;font-weight:700;color:#1b1d28;-webkit-text-stroke:0.25px #1b1d28;">0</div>
<div class="t" style="right:529.60px;top:915px;font-size:12px;line-height:12px;font-weight:700;color:#1b1d28;letter-spacing:1.402px;-webkit-text-stroke:0.25px #1b1d28;">142</div>
<svg style="left:356px;top:940.0px" width="6" height="8" viewBox="0 0 6 8"><path d="M0.3 0L5.3 3.8 0.3 7.6Z" fill="#3a3a3a"/></svg>
<div class="t" style="left:370.2px;top:938px;font-size:12px;line-height:12px;font-weight:700;color:#1b1d28;letter-spacing:0.705px;-webkit-text-stroke:0.25px #1b1d28;">Participare Congres Real...</div>
<div class="t" style="right:1055.40px;top:938px;font-size:12px;line-height:12px;font-weight:700;color:#1b1d28;-webkit-text-stroke:0.25px #1b1d28;">0</div>
<div class="t" style="right:949.70px;top:938px;font-size:12px;line-height:12px;font-weight:700;color:#1b1d28;letter-spacing:1.402px;-webkit-text-stroke:0.25px #1b1d28;">549</div>
<div class="t" style="right:845.70px;top:938px;font-size:12px;line-height:12px;font-weight:700;color:#1b1d28;-webkit-text-stroke:0.25px #1b1d28;">0</div>
<div class="t" style="right:739.13px;top:938px;font-size:12px;line-height:12px;font-weight:700;color:#1b1d28;letter-spacing:1.870px;-webkit-text-stroke:0.25px #1b1d28;">26</div>
<div class="t" style="right:636.00px;top:938px;font-size:12px;line-height:12px;font-weight:700;color:#1b1d28;-webkit-text-stroke:0.25px #1b1d28;">0</div>
<div class="t" style="right:529.60px;top:938px;font-size:12px;line-height:12px;font-weight:700;color:#1b1d28;letter-spacing:1.402px;-webkit-text-stroke:0.25px #1b1d28;">575</div>
<svg style="left:356px;top:963.0px" width="6" height="8" viewBox="0 0 6 8"><path d="M0.3 0L5.3 3.8 0.3 7.6Z" fill="#3a3a3a"/></svg>
<div class="t" style="left:370.2px;top:961px;font-size:12px;line-height:12px;font-weight:700;color:#1b1d28;letter-spacing:0.696px;-webkit-text-stroke:0.25px #1b1d28;">Administrativ Planificat</div>
<div class="t" style="right:1265.90px;top:961px;font-size:12px;line-height:12px;font-weight:700;color:#1b1d28;-webkit-text-stroke:0.25px #1b1d28;">0</div>
<div class="t" style="right:1159.03px;top:961px;font-size:12px;line-height:12px;font-weight:700;color:#1b1d28;letter-spacing:1.870px;-webkit-text-stroke:0.25px #1b1d28;">43</div>
<div class="t" style="right:1055.40px;top:961px;font-size:12px;line-height:12px;font-weight:700;color:#1b1d28;-webkit-text-stroke:0.25px #1b1d28;">0</div>
<div class="t" style="right:949.23px;top:961px;font-size:12px;line-height:12px;font-weight:700;color:#1b1d28;letter-spacing:1.870px;-webkit-text-stroke:0.25px #1b1d28;">32</div>
<div class="t" style="right:845.70px;top:961px;font-size:12px;line-height:12px;font-weight:700;color:#1b1d28;-webkit-text-stroke:0.25px #1b1d28;">0</div>
<div class="t" style="right:741.00px;top:961px;font-size:12px;line-height:12px;font-weight:700;color:#1b1d28;-webkit-text-stroke:0.25px #1b1d28;">5</div>
<div class="t" style="right:636.00px;top:961px;font-size:12px;line-height:12px;font-weight:700;color:#1b1d28;-webkit-text-stroke:0.25px #1b1d28;">0</div>
<div class="t" style="right:529.13px;top:961px;font-size:12px;line-height:12px;font-weight:700;color:#1b1d28;letter-spacing:1.870px;-webkit-text-stroke:0.25px #1b1d28;">80</div>
</body></html>
